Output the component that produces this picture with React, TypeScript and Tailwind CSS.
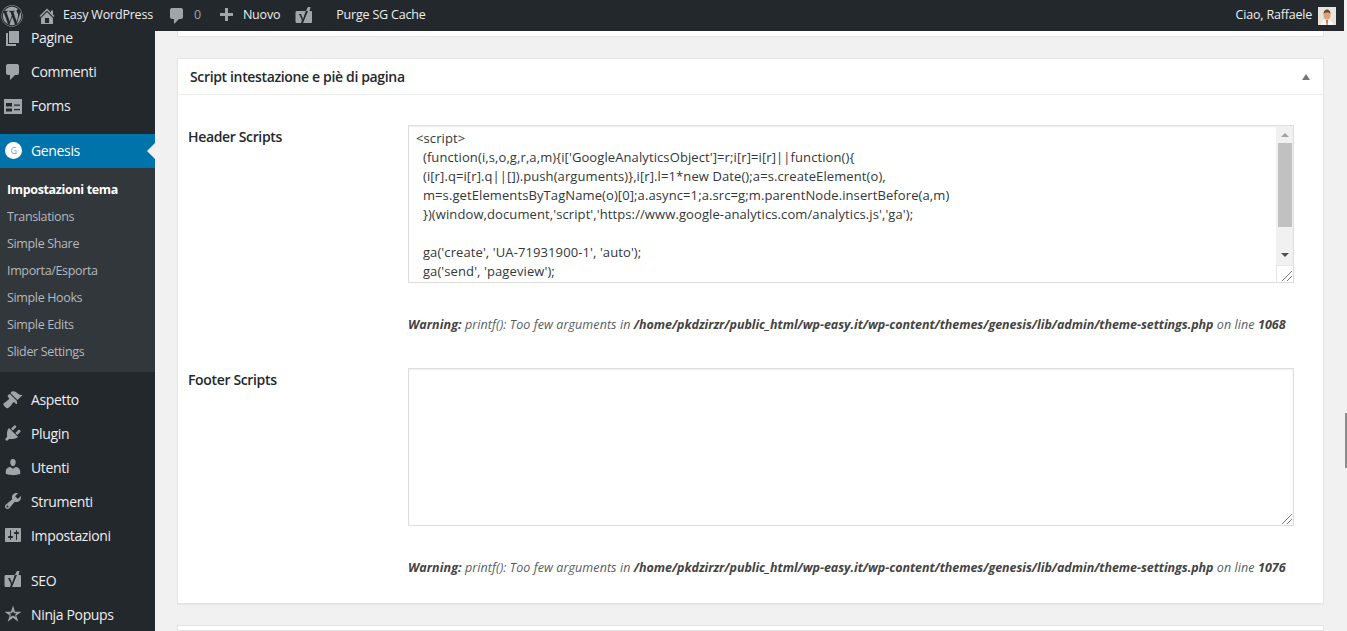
import React from "react";
import { FaWordpress } from "react-icons/fa";

const P: Record<string, string> = {
  home: "M16 8.5l1.53 1.53-1.06 1.06L10 4.62l-6.47 6.47-1.06-1.06L10 2.5l4 4v-2h2v4zm-6-2.46l6 5.99V18H4v-5.97zM12 17v-5H8v5h4z",
  comment: "M5 2h9c1.1 0 2 .9 2 2v7c0 1.1-.9 2-2 2h-2l-5 5v-5H5c-1.1 0-2-.9-2-2V4c0-1.1.9-2 2-2z",
  page: "M6 15V2h10v13H6zm-1 1h8v2H3V5h2v11z",
  brush: "M14.48 11.06L7.41 3.99l1.5-1.5c.5-.56 2.3-.47 3.51.32 1.21.8 1.43 1.28 2.91 2.1 1.18.64 2.45 1.26 4.45.85zm-.71.71L6.7 4.7 4.93 6.47c-.39.39-.39 1.02 0 1.41l1.06 1.06c.39.39.39 1.03 0 1.42-.6.6-1.43 1.11-2.21 1.69-.35.26-.7.53-1.01.84C1.43 13.23.4 14.4.4 15.01c-.01.61.11 1.34 1.47 2.7 1.36 1.36 2.09 1.48 2.7 1.47.61-.01 1.78-1.03 3.14-2.39.31-.31.58-.66.84-1.01.58-.78 1.09-1.61 1.69-2.21.39-.39 1.03-.39 1.42 0l1.06 1.06c.39.39 1.02.39 1.41 0z",
  plug: "M13.11 4.36L9.87 7.6 8 5.73l3.24-3.24c.35-.34 1.05-.2 1.56.32.52.51.66 1.21.31 1.55zm-8 1.77l.91-1.12 9.01 9.01-1.19.84c-.71.71-2.63 1.16-3.82 1.16H6.14L4.9 17.26c-.59.59-1.54.59-2.12 0-.59-.58-.59-1.53 0-2.12l1.24-1.24v-3.88c0-1.13.4-3.19 1.09-3.89zm7.26 3.97l3.24-3.24c.34-.35 1.04-.21 1.55.31.52.51.66 1.21.31 1.55l-3.24 3.25z",
  user: "M10 9.25c-2.27 0-2.73-3.44-2.73-3.44C7 4.02 7.82 2 9.97 2c2.16 0 2.98 2.02 2.71 3.81 0 0-.41 3.44-2.68 3.44zm0 2.57L12.72 10c2.39 0 4.52 2.33 4.52 4.53v2.49s-3.65 1.13-7.24 1.13c-3.65 0-7.24-1.13-7.24-1.13v-2.49c0-2.25 1.94-4.48 4.47-4.48z",
  tools: "M16.68 9.77c-1.34 1.34-3.3 1.67-4.95.99l-5.41 6.52c-.99.99-2.59.99-3.58 0s-.99-2.59 0-3.57l6.52-5.42c-.68-1.65-.35-3.61.99-4.95 1.28-1.28 3.12-1.62 4.72-1.06l-2.89 2.89 2.82 2.82 2.86-2.87c.53 1.58.18 3.39-1.08 4.65zM3.81 16.21c.4.39 1.04.39 1.43 0 .4-.4.4-1.04 0-1.43-.39-.4-1.03-.4-1.43 0-.39.39-.39 1.03 0 1.43z",
  settings: "M18 16V4c0-.55-.45-1-1-1H3c-.55 0-1 .45-1 1v12c0 .55.45 1 1 1h14c.55 0 1-.45 1-1zM8 11h1c.55 0 1 .45 1 1s-.45 1-1 1H8v1.5c0 .28-.22.5-.5.5s-.5-.22-.5-.5V13H6c-.55 0-1-.45-1-1s.45-1 1-1h1V5.5c0-.28.22-.5.5-.5s.5.22.5.5V11zm5-2h-1c-.55 0-1-.45-1-1s.45-1 1-1h1V5.5c0-.28.22-.5.5-.5s.5.22.5.5V7h1c.55 0 1 .45 1 1s-.45 1-1 1h-1v5.5c0 .28-.22.5-.5.5s-.5-.22-.5-.5V9z",
  forms: "M1 3h18v15H1zM3 7v3.500h6V7zm8 1.500v1.200h6V8.500zM3 12.500V15.500h6v-3zm8 .500v1.200h6V13z",
  plus: "M17 7v3h-5v5H9v-5H4V7h5V2h3v5h5z",
  yoast: "M3 5H11.800L14 1h2.500l-1 4H17c.6 0 1 .5 1 1v10c0 .6-.4 1-1 1H3c-1 0-1.500-.6-1.500-1.500V6.500C1.500 5.600 2 5 3 5zM5 8l3 6-1 3h2L14 5h-2.200L9 13 7 8z",
  star: "M10 1.500l2 6.300 6.500-.1-5.300 3.800 2.100 6.200-5.300-3.900-5.300 3.900 2.100-6.200L1.500 7.700 8 7.800zM10 7.500l-1.300 1.800-2.100-.1 1.300 1.700-.7 2 2.800-1.300 2.800 1.300-.7-2 1.300-1.700-2.100.1z",
};

function Dash({ name, className }: { name: string; className: string }) {
  return (
    <svg viewBox="0 0 20 20" className={className} fill="currentColor" fillRule="evenodd">
      <path d={P[name]} />
    </svg>
  );
}

function MenuRow({ icon, label, className = "" }: { icon: string; label: string; className?: string }) {
  return (
    <div className={`flex h-[34px] items-center text-[14px] text-[#eeeeee] ${className}`}>
      <span className="flex w-[31px] pl-[3px]">
        <Dash name={icon} className="h-5 w-5 text-[#a0a5aa]" />
      </span>
      <span>{label}</span>
    </div>
  );
}

const sub = ["Translations", "Simple Share", "Importa/Esporta", "Simple Hooks", "Simple Edits", "Slider Settings"];

const code = `<script>
  (function(i,s,o,g,r,a,m){i['GoogleAnalyticsObject']=r;i[r]=i[r]||function(){
  (i[r].q=i[r].q||[]).push(arguments)},i[r].l=1*new Date();a=s.createElement(o),
  m=s.getElementsByTagName(o)[0];a.async=1;a.src=g;m.parentNode.insertBefore(a,m)
  })(window,document,'script','https://www.google-analytics.com/analytics.js','ga');

  ga('create', 'UA-71931900-1', 'auto');
  ga('send', 'pageview');`;

function Grip() {
  return (
    <svg viewBox="0 0 16 16" className="h-4 w-4 text-[#777]" stroke="currentColor" fill="none">
      <path d="M5 15L15 5M10 15l5-5" />
    </svg>
  );
}

function Warning({ line }: { line: string }) {
  return (
    <p className="ml-[220px] whitespace-nowrap text-[12.500px] italic leading-[18px] tracking-[0.08px] text-[#555d66]">
      <b className="text-[#444]">Warning:</b> printf(): Too few arguments in{" "}
      <b className="tracking-[-0.05px] text-[#444]">/home/pkdzirzr/public_html/wp-easy.it/wp-content/themes/genesis/lib/admin/theme-settings.php</b> on line{" "}
      <b className="text-[#444]">{line}</b>
    </p>
  );
}

export default function App() {
  return (
    <div className="relative flex h-[631px] w-[1347px] flex-col overflow-hidden bg-[#f1f1f1] font-['Open_Sans',sans-serif] tracking-[-0.35px]">
      <header className="relative z-10 mr-[3px] flex h-[31px] shrink-0 items-center bg-[#23282d] text-[12.500px] tracking-[-0.2px] text-[#eeeeee]">
        <FaWordpress className="ml-[1px] h-[22px] w-[22px] text-[#a0a5aa]" />
        <Dash name="home" className="ml-[14px] h-5 w-5 text-[#a0a5aa]" />
        <span className="ml-[6px]">Easy WordPress</span>
        <Dash name="comment" className="ml-[14px] h-5 w-5 text-[#a0a5aa]" />
        <span className="ml-[7px] text-[#a0a5aa]">0</span>
        <Dash name="plus" className="ml-[15px] h-5 w-5 text-[#a0a5aa]" />
        <span className="ml-[7px]">Nuovo</span>
        <Dash name="yoast" className="ml-[14px] h-5 w-5 text-[#a0a5aa]" />
        <span className="ml-[22px]">Purge SG Cache</span>
        <span className="ml-auto">Ciao, Raffaele</span>
        <svg viewBox="0 0 18 18" className="ml-[6px] mr-[8px] h-[18px] w-[18px]">
          <rect width="18" height="18" fill="#e8e4da" />
          <path d="M3 18c0-4 3-5 6-5s6 1 6 5z" fill="#f7f7f5" />
          <path d="M8 13h2l-.500 5h-1z" fill="#b86a3c" />
          <ellipse cx="9" cy="8" rx="3.500" ry="4.500" fill="#dca27c" />
          <path d="M5.500 7c0-3 1.500-4.500 3.500-4.500S12.500 4 12.500 7c-1-2-6-2-7 0z" fill="#6b4a35" />
        </svg>
      </header>

      <div className="flex min-h-0 flex-1">
        <nav className="-mt-[10px] flex w-[155px] shrink-0 flex-col bg-[#23282d]">
          <MenuRow icon="page" label="Pagine" />
          <MenuRow icon="comment" label="Commenti" />
          <MenuRow icon="forms" label="Forms" />
          <div className="relative mt-[11px] flex h-[34px] items-center bg-[#0073aa] text-[14px] text-white">
            <span className="ml-[5px] mr-[9px] flex h-[17px] w-[17px] items-center justify-center rounded-full bg-white text-[9px] text-[#8a99a5]">
              G
            </span>
            <span>Genesis</span>
            <span className="absolute right-0 top-[9px] h-0 w-0 border-y-[8px] border-r-[8px] border-y-transparent border-r-[#f1f1f1]" />
          </div>
          <div className="flex h-[205px] flex-col bg-[#32373c] pt-[9px] text-[12.500px] text-[#b4b9be]">
            <div className="flex h-[27px] items-center pl-[7px] font-bold text-white">Impostazioni tema</div>
            {sub.map((s) => (
              <div key={s} className="flex h-[27px] items-center pl-[7px]">
                {s}
              </div>
            ))}
          </div>
          <div className="mt-[10px]">
            <MenuRow icon="brush" label="Aspetto" />
            <MenuRow icon="plug" label="Plugin" />
            <MenuRow icon="user" label="Utenti" />
            <MenuRow icon="tools" label="Strumenti" />
            <MenuRow icon="settings" label="Impostazioni" />
          </div>
          <MenuRow icon="yoast" label="SEO" className="mt-[11px]" />
          <MenuRow icon="star" label="Ninja Popups" />
        </nav>

        <main className="flex min-w-0 flex-1 flex-col pl-[22px] pr-[23px]">
          <div className="h-[6px] shrink-0 border-x border-b border-[#e5e5e5] bg-white" />
          <section className="mt-[21px] flex h-[546px] shrink-0 flex-col border border-[#e5e5e5] bg-white shadow-[0_1px_1px_rgba(0,0,0,0.04)]">
            <div className="flex h-[36px] shrink-0 items-center justify-between border-b border-[#eeeeee] pl-[12px] pr-[13px]">
              <h2 className="text-[14px] font-semibold text-[#23282d]">Script intestazione e piè di pagina</h2>
              <span className="h-0 w-0 border-x-[4px] border-b-[6px] border-x-transparent border-b-[#72777c]" />
            </div>
            <div className="flex flex-col px-[10px] pt-[30px]">
              <div className="flex">
                <div className="w-[220px] shrink-0 pt-[3px] text-[14px] font-semibold leading-[18px] text-[#23282d]">Header Scripts</div>
                <div className="flex h-[158px] w-[886px] border border-[#dddddd] shadow-[inset_0_1px_2px_rgba(0,0,0,0.07)]">
                  <pre className="min-w-0 flex-1 overflow-hidden px-[7px] pt-[3px] font-['Open_Sans',sans-serif] text-[13px] leading-[19px] tracking-[0.1px] text-[#32373c]">{code}</pre>
                  <div className="flex w-[17px] shrink-0 flex-col bg-[#f1f1f1]">
                    <div className="flex h-[17px] items-center justify-center">
                      <span className="h-0 w-0 border-x-[4px] border-b-[4px] border-x-transparent border-b-[#a3a3a3]" />
                    </div>
                    <div className="mx-auto h-[84px] w-[14px] bg-[#c1c1c1]" />
                    <div className="mt-auto flex h-[20px] items-center justify-center">
                      <span className="h-0 w-0 border-x-[4px] border-t-[4px] border-x-transparent border-t-[#505050]" />
                    </div>
                    <div className="flex h-[17px] items-end justify-end border-l border-t border-[#e6e6e6] bg-white">
                      <Grip />
                    </div>
                  </div>
                </div>
              </div>
              <div className="mt-[33px]">
                <Warning line="1068" />
              </div>
              <div className="mt-[34px] flex">
                <div className="w-[220px] shrink-0 pt-[3px] text-[14px] font-semibold leading-[18px] text-[#23282d]">Footer Scripts</div>
                <div className="flex h-[158px] w-[886px] items-end justify-end border border-[#dddddd] shadow-[inset_0_1px_2px_rgba(0,0,0,0.07)]">
                  <Grip />
                </div>
              </div>
              <div className="mt-[33px]">
                <Warning line="1076" />
              </div>
            </div>
          </section>
          <div className="mt-[21px] flex-1 border border-[#e5e5e5] bg-white" />
        </main>
      </div>
      <div className="absolute right-0 top-[413px] h-[55px] w-[2px] bg-[#8c8c8c]" />
    </div>
  );
}
